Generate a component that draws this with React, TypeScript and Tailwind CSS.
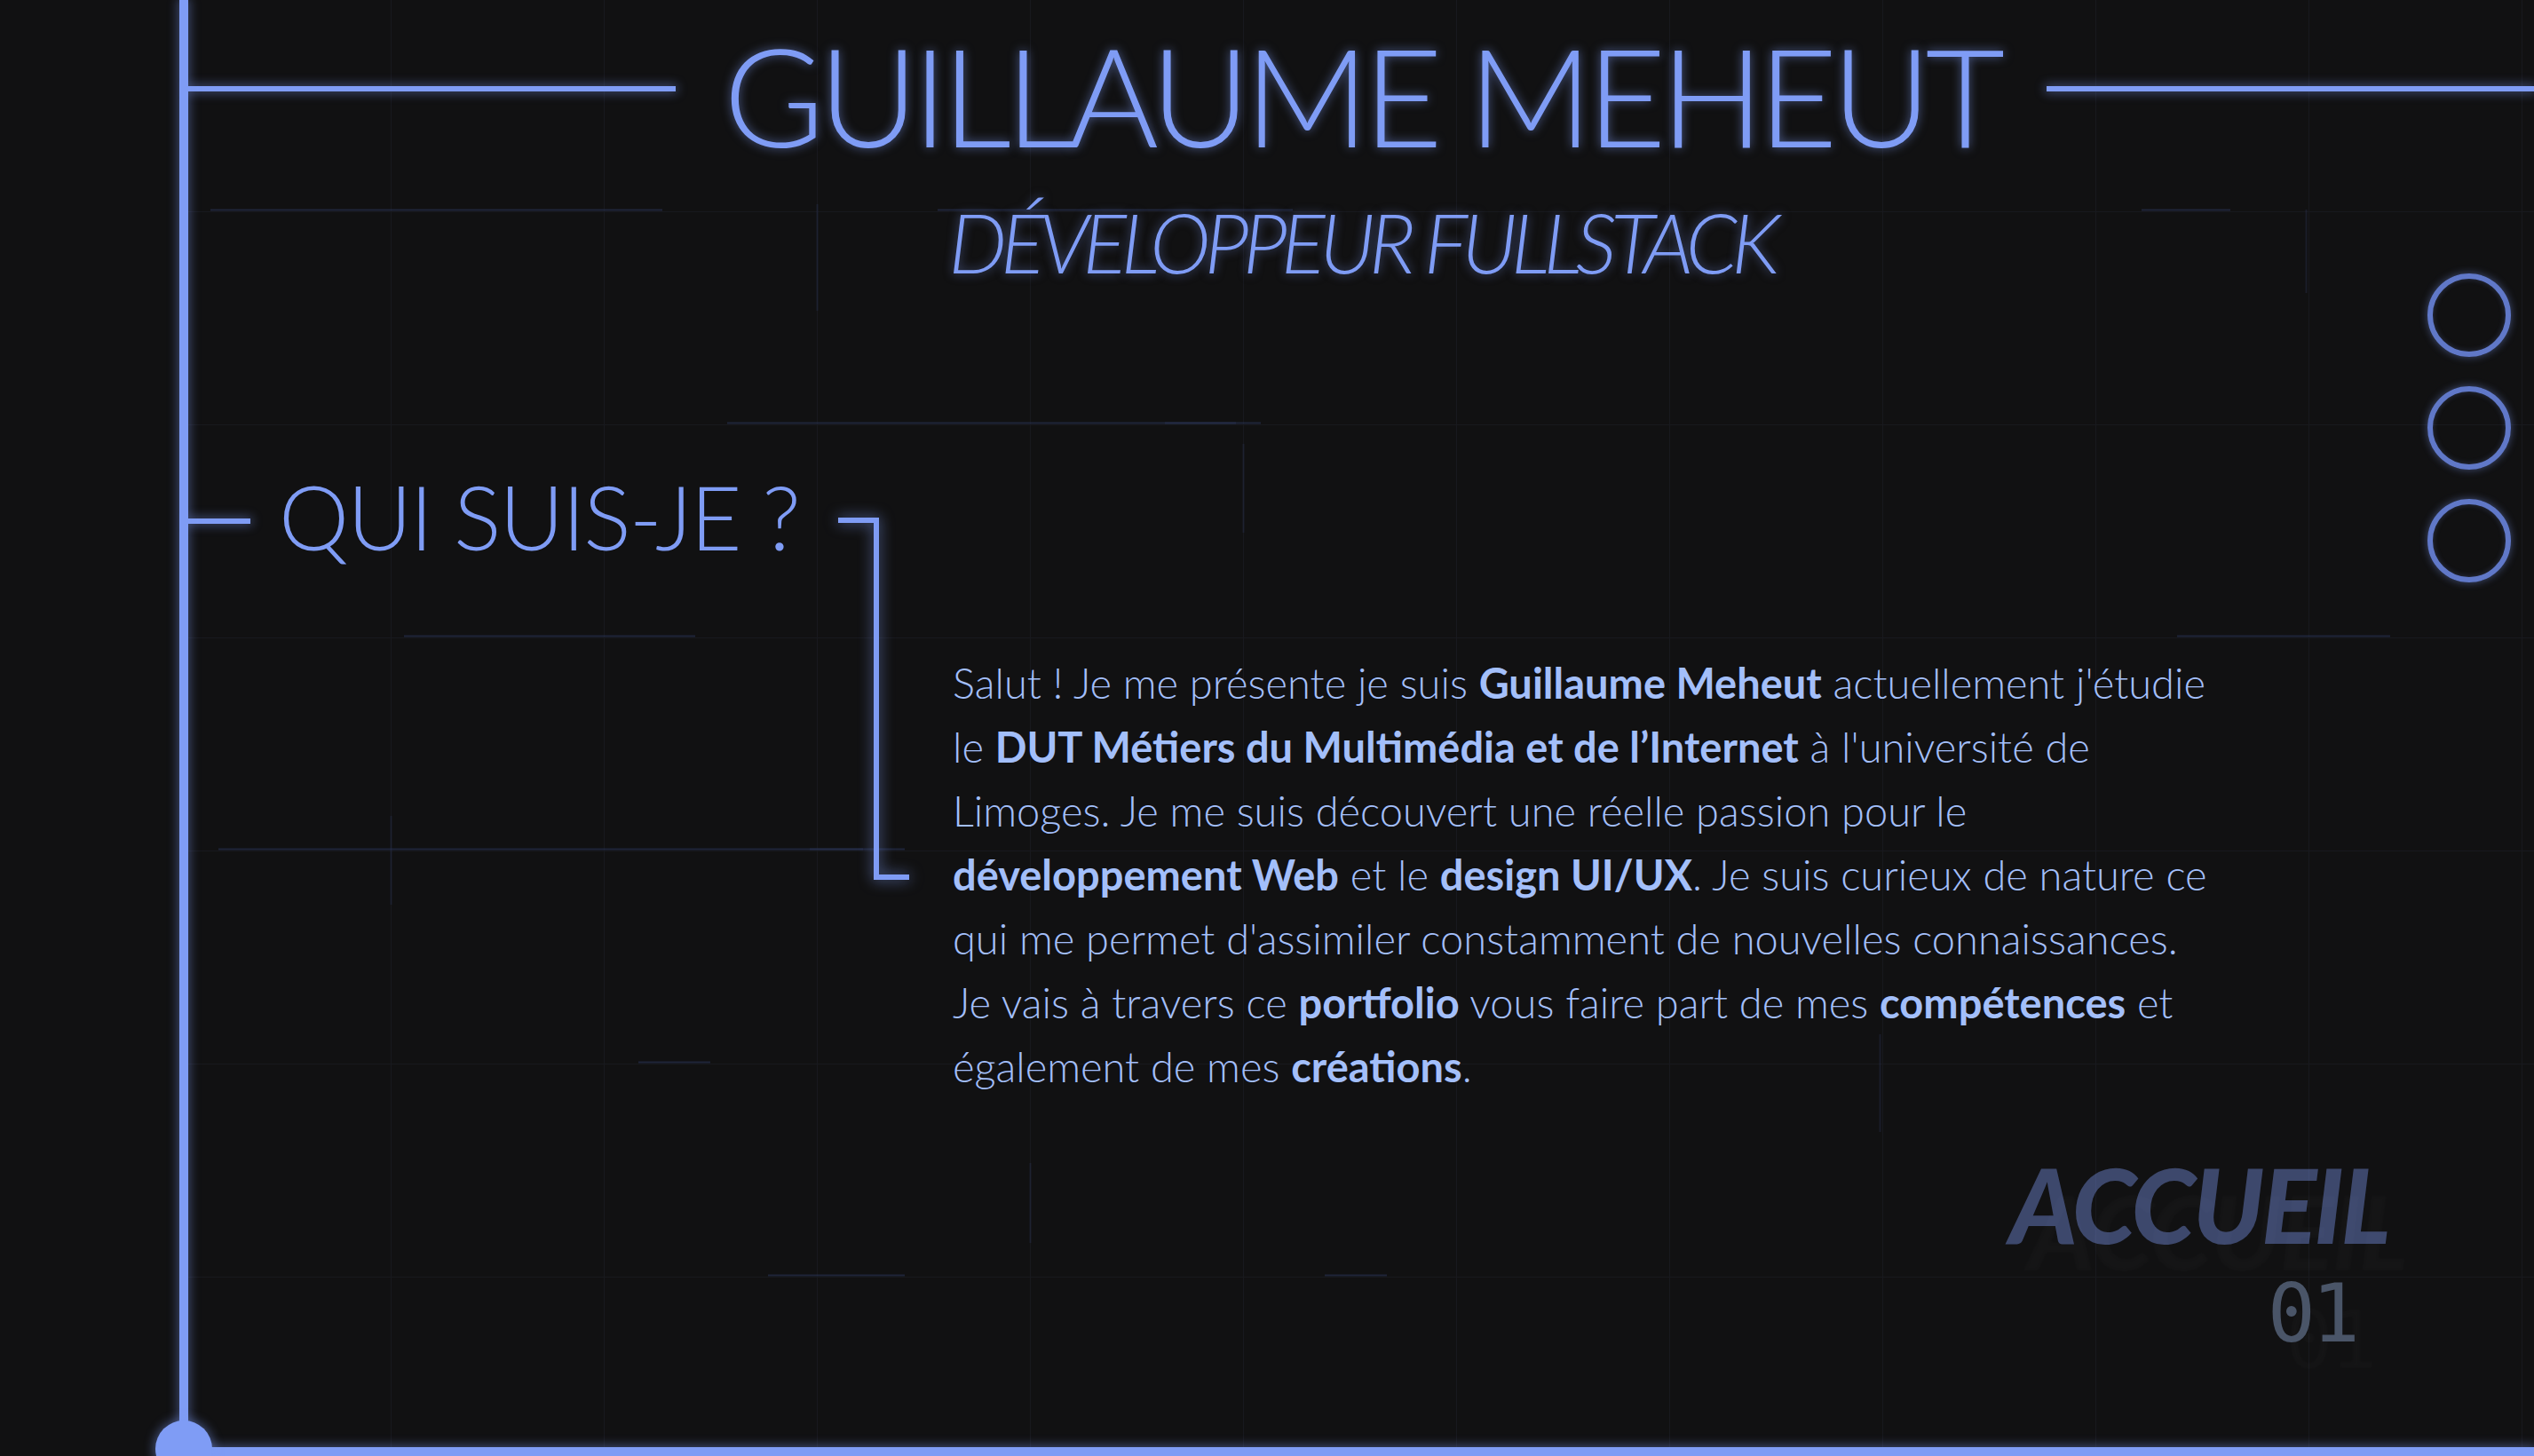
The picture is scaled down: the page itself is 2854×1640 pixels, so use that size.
import React from 'react';

const line = "bg-[#7f9cf5] shadow-[0_0_12px_2px_rgba(127,156,245,0.4)]";

function GridGlow() {
  // faint highlighted segments running along the background grid
  const h: [number, number, number][] = [
    [236, 25, 534], [236, 844, 1244], [476, 607, 1208], [476, 1100, 1180],
    [716, 243, 571], [956, 34, 807], [956, 700, 760], [1196, 507, 588],
    [1436, 653, 807], [1436, 1280, 1350], [716, 2240, 2480], [236, 2200, 2300],
  ];
  const v: [number, number, number][] = [
    [228, 919, 1019], [948, 1310, 1400], [1905, 1165, 1275], [2385, 236, 330],
    [1188, 500, 600], [708, 230, 350],
  ];
  return (
    <svg className="pointer-events-none absolute inset-0 h-full w-full" aria-hidden>
      {h.map(([y, x1, x2], i) => (
        <line key={'h' + i} x1={x1} x2={x2} y1={y + 0.5} y2={y + 0.5} stroke="#2a3454" strokeOpacity={0.6} strokeWidth={2} />
      ))}
      {v.map(([x, y1, y2], i) => (
        <line key={'v' + i} x1={x + 0.5} x2={x + 0.5} y1={y1} y2={y2} stroke="#27304d" strokeOpacity={0.4} strokeWidth={2} />
      ))}
    </svg>
  );
}

export default function App() {
  return (
    <div className="flex h-[1640px] w-[2854px] overflow-hidden bg-[#111112] font-['Lato',sans-serif] text-[#7f9cf5]">
      <div className="w-[202px] shrink-0" />
      <div className={`relative z-10 w-[10px] shrink-0 ${line}`}>
        <div className="absolute bottom-[-24px] left-[-27px] h-[64px] w-[64px] rounded-full bg-[#7f9cf5] shadow-[0_0_12px_2px_rgba(127,156,245,0.45)]" />
      </div>

      <main className="relative flex flex-1 flex-col bg-[linear-gradient(to_right,#18191e_1px,transparent_1px),linear-gradient(to_bottom,#18191e_1px,transparent_1px)] [background-position:-12px_-2px] [background-size:240px_240px]">
        <GridGlow />

        <header className="relative flex items-start">
          <div className={`mt-[97px] h-[6px] flex-1 ${line}`} />
          <h1 className="mx-[54px] mt-[29px] whitespace-nowrap text-[155px] font-light leading-none tracking-[-7px] [text-shadow:0_0_12px_rgba(127,156,245,0.55)]">
            GUILLAUME MEHEUT
          </h1>
          <div className={`mt-[97px] h-[6px] flex-1 ${line}`} />
        </header>
        <p className="relative mt-[42px] text-center text-[93px] font-light italic leading-none tracking-[-7px] [text-shadow:0_0_12px_rgba(127,156,245,0.5)]">
          DÉVELOPPEUR FULLSTACK
        </p>

        <section className="relative mt-[201px] flex items-start">
          <div className={`mt-[64px] h-[6px] w-[70px] ${line}`} />
          <h2 className="ml-[32px] mt-[11px] w-[630px] whitespace-nowrap text-[100px] font-light leading-none tracking-[-2px]">
            QUI SUIS-JE ?
          </h2>
          <div className="mt-[63px] flex flex-col drop-shadow-[0_0_8px_rgba(127,156,245,0.7)]">
            <div className="h-[402px] w-[46px] border-r-[6px] border-t-[6px] border-[#7f9cf5]" />
            <div className="ml-[40px] h-[6px] w-[40px] bg-[#7f9cf5]" />
          </div>
          <p className="ml-[49px] mt-[213px] w-[1430px] text-[47px] font-light leading-[72px] text-[#a3bffa]">
            Salut ! Je me présente je suis <b className="font-bold">Guillaume Meheut</b> actuellement j'étudie le{' '}
            <b className="font-bold">DUT Métiers du Multimédia et de l’Internet</b> à l'université de Limoges. Je me suis
            découvert une réelle passion pour le <b className="font-bold">développement Web</b> et le{' '}
            <b className="font-bold">design UI/UX</b>. Je suis curieux de nature ce qui me permet d'assimiler constamment de
            nouvelles connaissances. Je vais à travers ce <b className="font-bold">portfolio</b> vous faire part de mes{' '}
            <b className="font-bold">compétences</b> et également de mes <b className="font-bold">créations</b>.
          </p>
        </section>

        <div className="relative mr-[164px] mt-[62px] flex flex-col items-end self-end">
          <span className="text-[116px] font-black italic leading-none tracking-[-3px] text-[#7f9cf5]/40 [text-shadow:20px_30px_3px_rgba(255,255,255,0.02)]">
            ACCUEIL
          </span>
          <span className="mr-[36px] mt-[20px] font-['DejaVu_Sans_Mono',monospace] text-[90px] leading-none tracking-[-4px] text-[#4a5568] [text-shadow:20px_30px_3px_rgba(255,255,255,0.02)]">
            01
          </span>
        </div>

        <div className={`relative mt-auto h-[10px] ${line}`} />

        <nav className="absolute right-[26px] top-[308px] flex flex-col gap-[33px]">
          {[0, 1, 2].map((i) => (
            <span
              key={i}
              className="h-[94px] w-[94px] rounded-full border-[6px] border-[#6078c8] shadow-[0_0_10px_rgba(127,156,245,0.45),inset_0_0_6px_rgba(127,156,245,0.25)]"
            />
          ))}
        </nav>
      </main>
    </div>
  );
}
